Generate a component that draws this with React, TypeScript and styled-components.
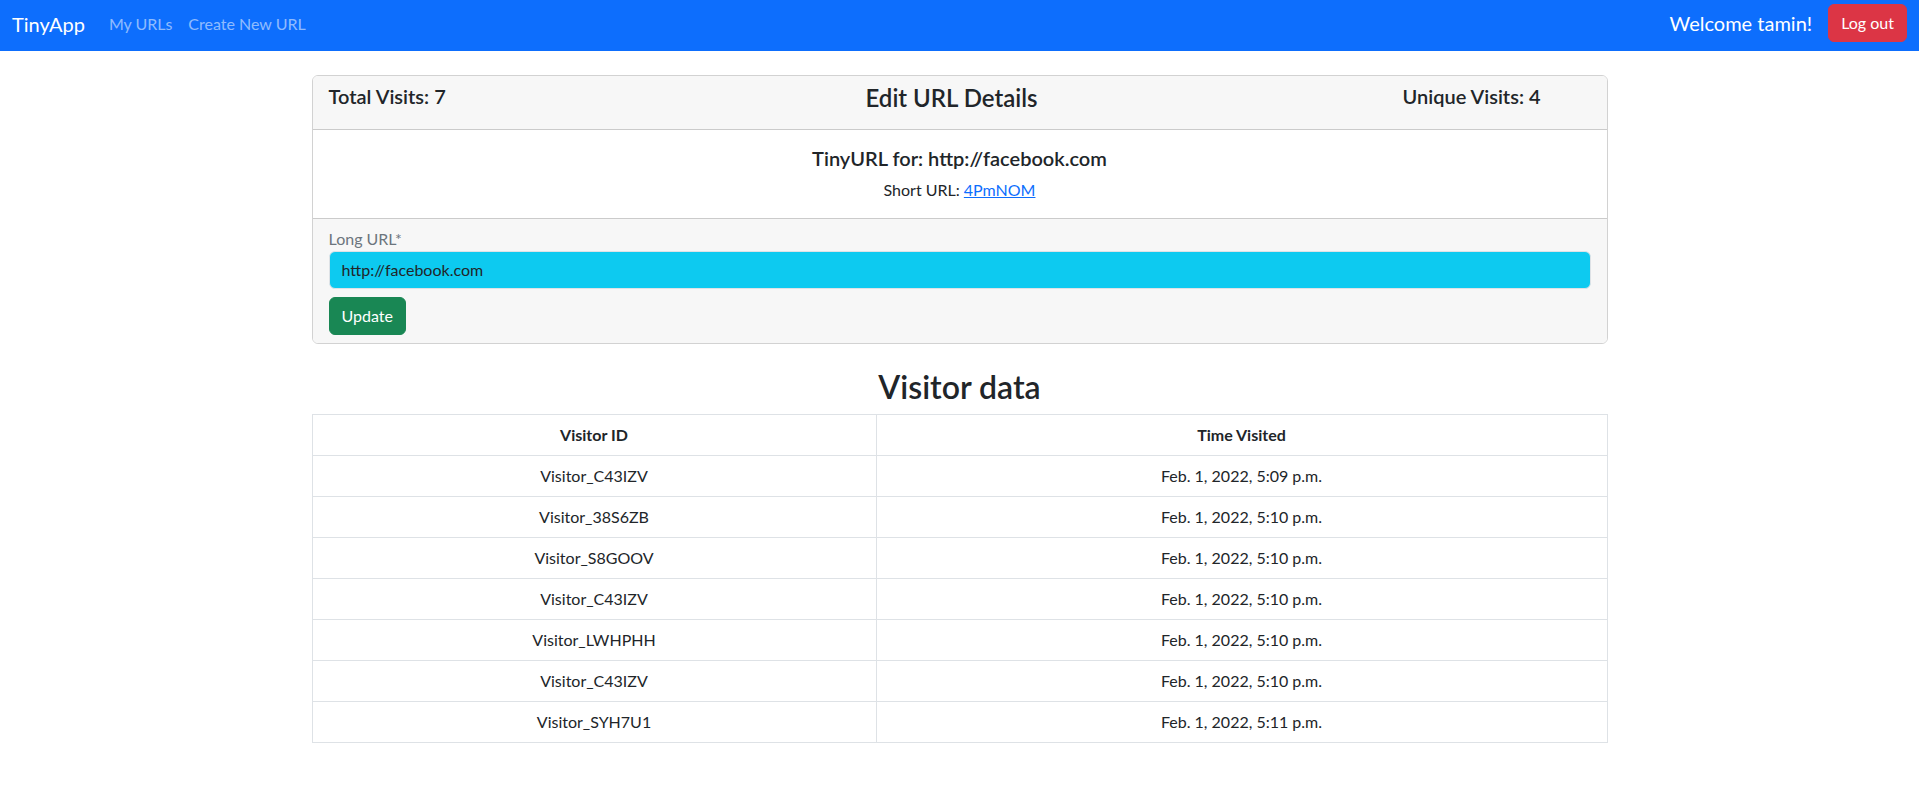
import React from "react";
import styled, { createGlobalStyle } from "styled-components";

const GlobalStyle = createGlobalStyle`
  *, *::before, *::after { box-sizing: border-box; }
  body {
    margin: 0;
    font-family: Lato, "Open Sans", "Liberation Sans", sans-serif;
    font-size: 16px;
    line-height: 1.5;
    color: #212529;
    background: #ffffff;
  }
`;

const Navbar = styled.nav`
  height: 51px;
  padding: 4px 12px 0;
  background: #0d6efd;
  display: flex;
  align-items: flex-start;
  justify-content: space-between;
`;

const NavLeft = styled.div`
  display: flex;
  align-items: flex-start;
`;

const Brand = styled.a`
  font-size: 20px;
  line-height: 30px;
  padding: 5px 0;
  margin-right: 16px;
  color: #ffffff;
  text-decoration: none;
`;

const NavLink = styled.a`
  font-size: 16px;
  line-height: 24px;
  padding: 8px 8px;
  color: rgba(255, 255, 255, 0.55);
  text-decoration: none;
`;

const NavRight = styled.div`
  display: flex;
  align-items: center;
  gap: 16px;
  height: 38px;
`;

const Welcome = styled.span`
  font-size: 20px;
  line-height: 30px;
  color: #ffffff;
`;

const Button = styled.button<{ $variant: "danger" | "success" }>`
  font-family: inherit;
  font-size: 16px;
  line-height: 24px;
  padding: 6px 12px;
  border-radius: 6px;
  color: #ffffff;
  cursor: pointer;
  background: ${(p) => (p.$variant === "danger" ? "#dc3545" : "#198754")};
  border: 1px solid ${(p) => (p.$variant === "danger" ? "#dc3545" : "#198754")};
`;

const Container = styled.main`
  max-width: 1320px;
  margin: 24px auto 0;
  padding: 0 12px;
`;

const Card = styled.section`
  border: 1px solid rgba(0, 0, 0, 0.175);
  border-radius: 6px;
  overflow: hidden;
`;

const CardHeader = styled.header`
  display: grid;
  grid-template-columns: 172px 1fr 188px;
  align-items: start;
  padding: 8px 16px;
  background: #f7f7f7;
  border-bottom: 1px solid rgba(0, 0, 0, 0.175);
`;

const Stat = styled.h5`
  margin: 0 0 8px;
  font-size: 20px;
  font-weight: 600;
  line-height: 1.2;
`;

const Title = styled.h4`
  margin: 0 0 8px;
  font-size: 24px;
  font-weight: 600;
  line-height: 1.2;
  text-align: center;
`;

const CardBody = styled.div`
  padding: 16px;
  text-align: center;
`;

const BodyTitle = styled.h5`
  margin: 0 0 8px;
  font-size: 20px;
  font-weight: 600;
  line-height: 1.2;
`;

const BodyText = styled.p`
  margin: 0;
`;

const Link = styled.a`
  color: #0d6efd;
  text-decoration: underline;
`;

const CardFooter = styled.form`
  padding: 8px 16px;
  background: #f7f7f7;
  border-top: 1px solid rgba(0, 0, 0, 0.175);
  display: flex;
  flex-direction: column;
  align-items: flex-start;
`;

const Label = styled.label`
  color: #6c757d;
  line-height: 24px;
`;

const Input = styled.input`
  width: 100%;
  height: 38px;
  padding: 6px 12px;
  font-family: inherit;
  font-size: 16px;
  line-height: 24px;
  color: #212529;
  background: #0dcaf0;
  border: 1px solid #dee2e6;
  border-radius: 6px;
  margin-bottom: 8px;
`;

const SectionTitle = styled.h2`
  margin: 24px 0 8px;
  font-size: 32px;
  font-weight: 600;
  line-height: 1.2;
  text-align: center;
`;

const Table = styled.table`
  width: 100%;
  border-collapse: collapse;
  table-layout: fixed;
  border: 1px solid #dee2e6;
`;

const Th = styled.th`
  padding: 8px;
  line-height: 24px;
  font-weight: 700;
  text-align: center;
  border: 1px solid #dee2e6;
`;

const Td = styled.td`
  padding: 8px;
  line-height: 24px;
  text-align: center;
  border: 1px solid #dee2e6;
`;

const visits = [
  { id: "Visitor_C43IZV", time: "Feb. 1, 2022, 5:09 p.m." },
  { id: "Visitor_38S6ZB", time: "Feb. 1, 2022, 5:10 p.m." },
  { id: "Visitor_S8GOOV", time: "Feb. 1, 2022, 5:10 p.m." },
  { id: "Visitor_C43IZV", time: "Feb. 1, 2022, 5:10 p.m." },
  { id: "Visitor_LWHPHH", time: "Feb. 1, 2022, 5:10 p.m." },
  { id: "Visitor_C43IZV", time: "Feb. 1, 2022, 5:10 p.m." },
  { id: "Visitor_SYH7U1", time: "Feb. 1, 2022, 5:11 p.m." },
];

export default function App() {
  return (
    <>
      <GlobalStyle />
      <Navbar>
        <NavLeft>
          <Brand href="#">TinyApp</Brand>
          <NavLink href="#">My URLs</NavLink>
          <NavLink href="#">Create New URL</NavLink>
        </NavLeft>
        <NavRight>
          <Welcome>Welcome tamin!</Welcome>
          <Button $variant="danger" type="button">Log out</Button>
        </NavRight>
      </Navbar>
      <Container>
        <Card>
          <CardHeader>
            <Stat>Total Visits: 7</Stat>
            <Title>Edit URL Details</Title>
            <Stat>Unique Visits: 4</Stat>
          </CardHeader>
          <CardBody>
            <BodyTitle>TinyURL for: http://facebook.com</BodyTitle>
            <BodyText>
              Short URL: <Link href="#">4PmNOM</Link>
            </BodyText>
          </CardBody>
          <CardFooter onSubmit={(e) => e.preventDefault()}>
            <Label htmlFor="longURL">Long URL*</Label>
            <Input id="longURL" type="text" defaultValue="http://facebook.com" />
            <Button $variant="success" type="submit">Update</Button>
          </CardFooter>
        </Card>
        <SectionTitle>Visitor data</SectionTitle>
        <Table>
          <colgroup>
            <col style={{ width: "564px" }} />
            <col />
          </colgroup>
          <thead>
            <tr>
              <Th>Visitor ID</Th>
              <Th>Time Visited</Th>
            </tr>
          </thead>
          <tbody>
            {visits.map((v, i) => (
              <tr key={i}>
                <Td>{v.id}</Td>
                <Td>{v.time}</Td>
              </tr>
            ))}
          </tbody>
        </Table>
      </Container>
    </>
  );
}
